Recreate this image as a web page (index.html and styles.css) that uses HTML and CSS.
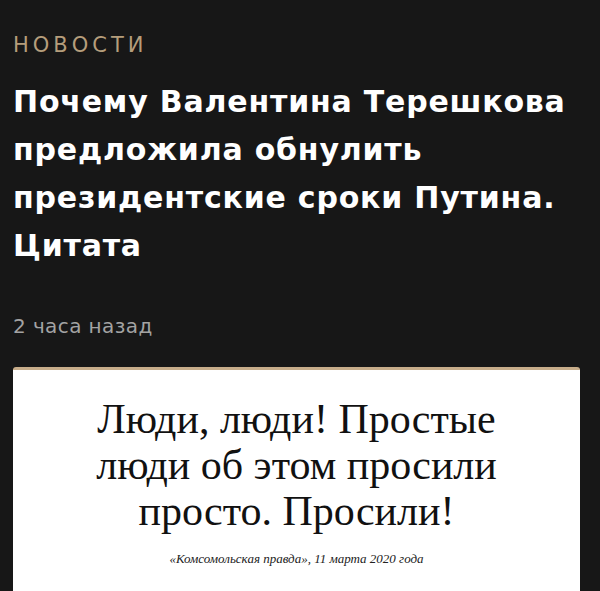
FILE: index.html
```html
<!DOCTYPE html>
<html lang="ru">
  <head>
    <meta charset="utf-8">
    <title>Новости</title>
    <link rel="stylesheet" href="styles.css">
  </head>
  <body>
    <article class="story">
      <div class="rubric">Новости</div>
      <h1 class="headline">
        Почему Валентина Терешкова предложила обнулить президентские сроки
        Путина. Цитата
      </h1>
      <div class="time">2 часа назад</div>
      <figure class="quote-card">
        <blockquote class="quote">
          Люди, люди! Простые<br>
          люди об этом просили<br>
          просто. Просили!
        </blockquote>
        <figcaption class="source">«Комсомольская правда», 11 марта 2020 года</figcaption>
      </figure>
    </article>
  </body>
</html>
```

FILE: styles.css
```css
body {
  margin: 0;
  background: #171717;
  font-family: "DejaVu Sans", "Noto Sans", sans-serif;
  overflow: hidden;
}

.story {
  padding: 33px 20px 0 13px;
}

.rubric {
  color: #b59d7b;
  font-size: 21px;
  letter-spacing: 4px;
  text-transform: uppercase;
  line-height: 24px;
}

.headline {
  margin: 21px 0 0;
  color: #fff;
  font-size: 30px;
  font-weight: 700;
  line-height: 48px;
  letter-spacing: 0.8px;
}

.time {
  margin-top: 45px;
  color: #a3a3a3;
  font-size: 20px;
  line-height: 22px;
  letter-spacing: 0.4px;
}

.quote-card {
  margin: 30px 0 0;
  background: #fff;
  border-top: 3px solid #c7ad8a;
  border-radius: 3px 3px 0 0;
  padding: 26px 0 30px;
  text-align: center;
}

.quote {
  margin: 0;
  font-family: "Liberation Serif", serif;
  font-size: 42px;
  line-height: 46px;
  color: #111;
}

.source {
  margin-top: 17px;
  font-family: "Liberation Serif", serif;
  font-style: italic;
  font-size: 13px;
  line-height: 15px;
  color: #222;
}
```
